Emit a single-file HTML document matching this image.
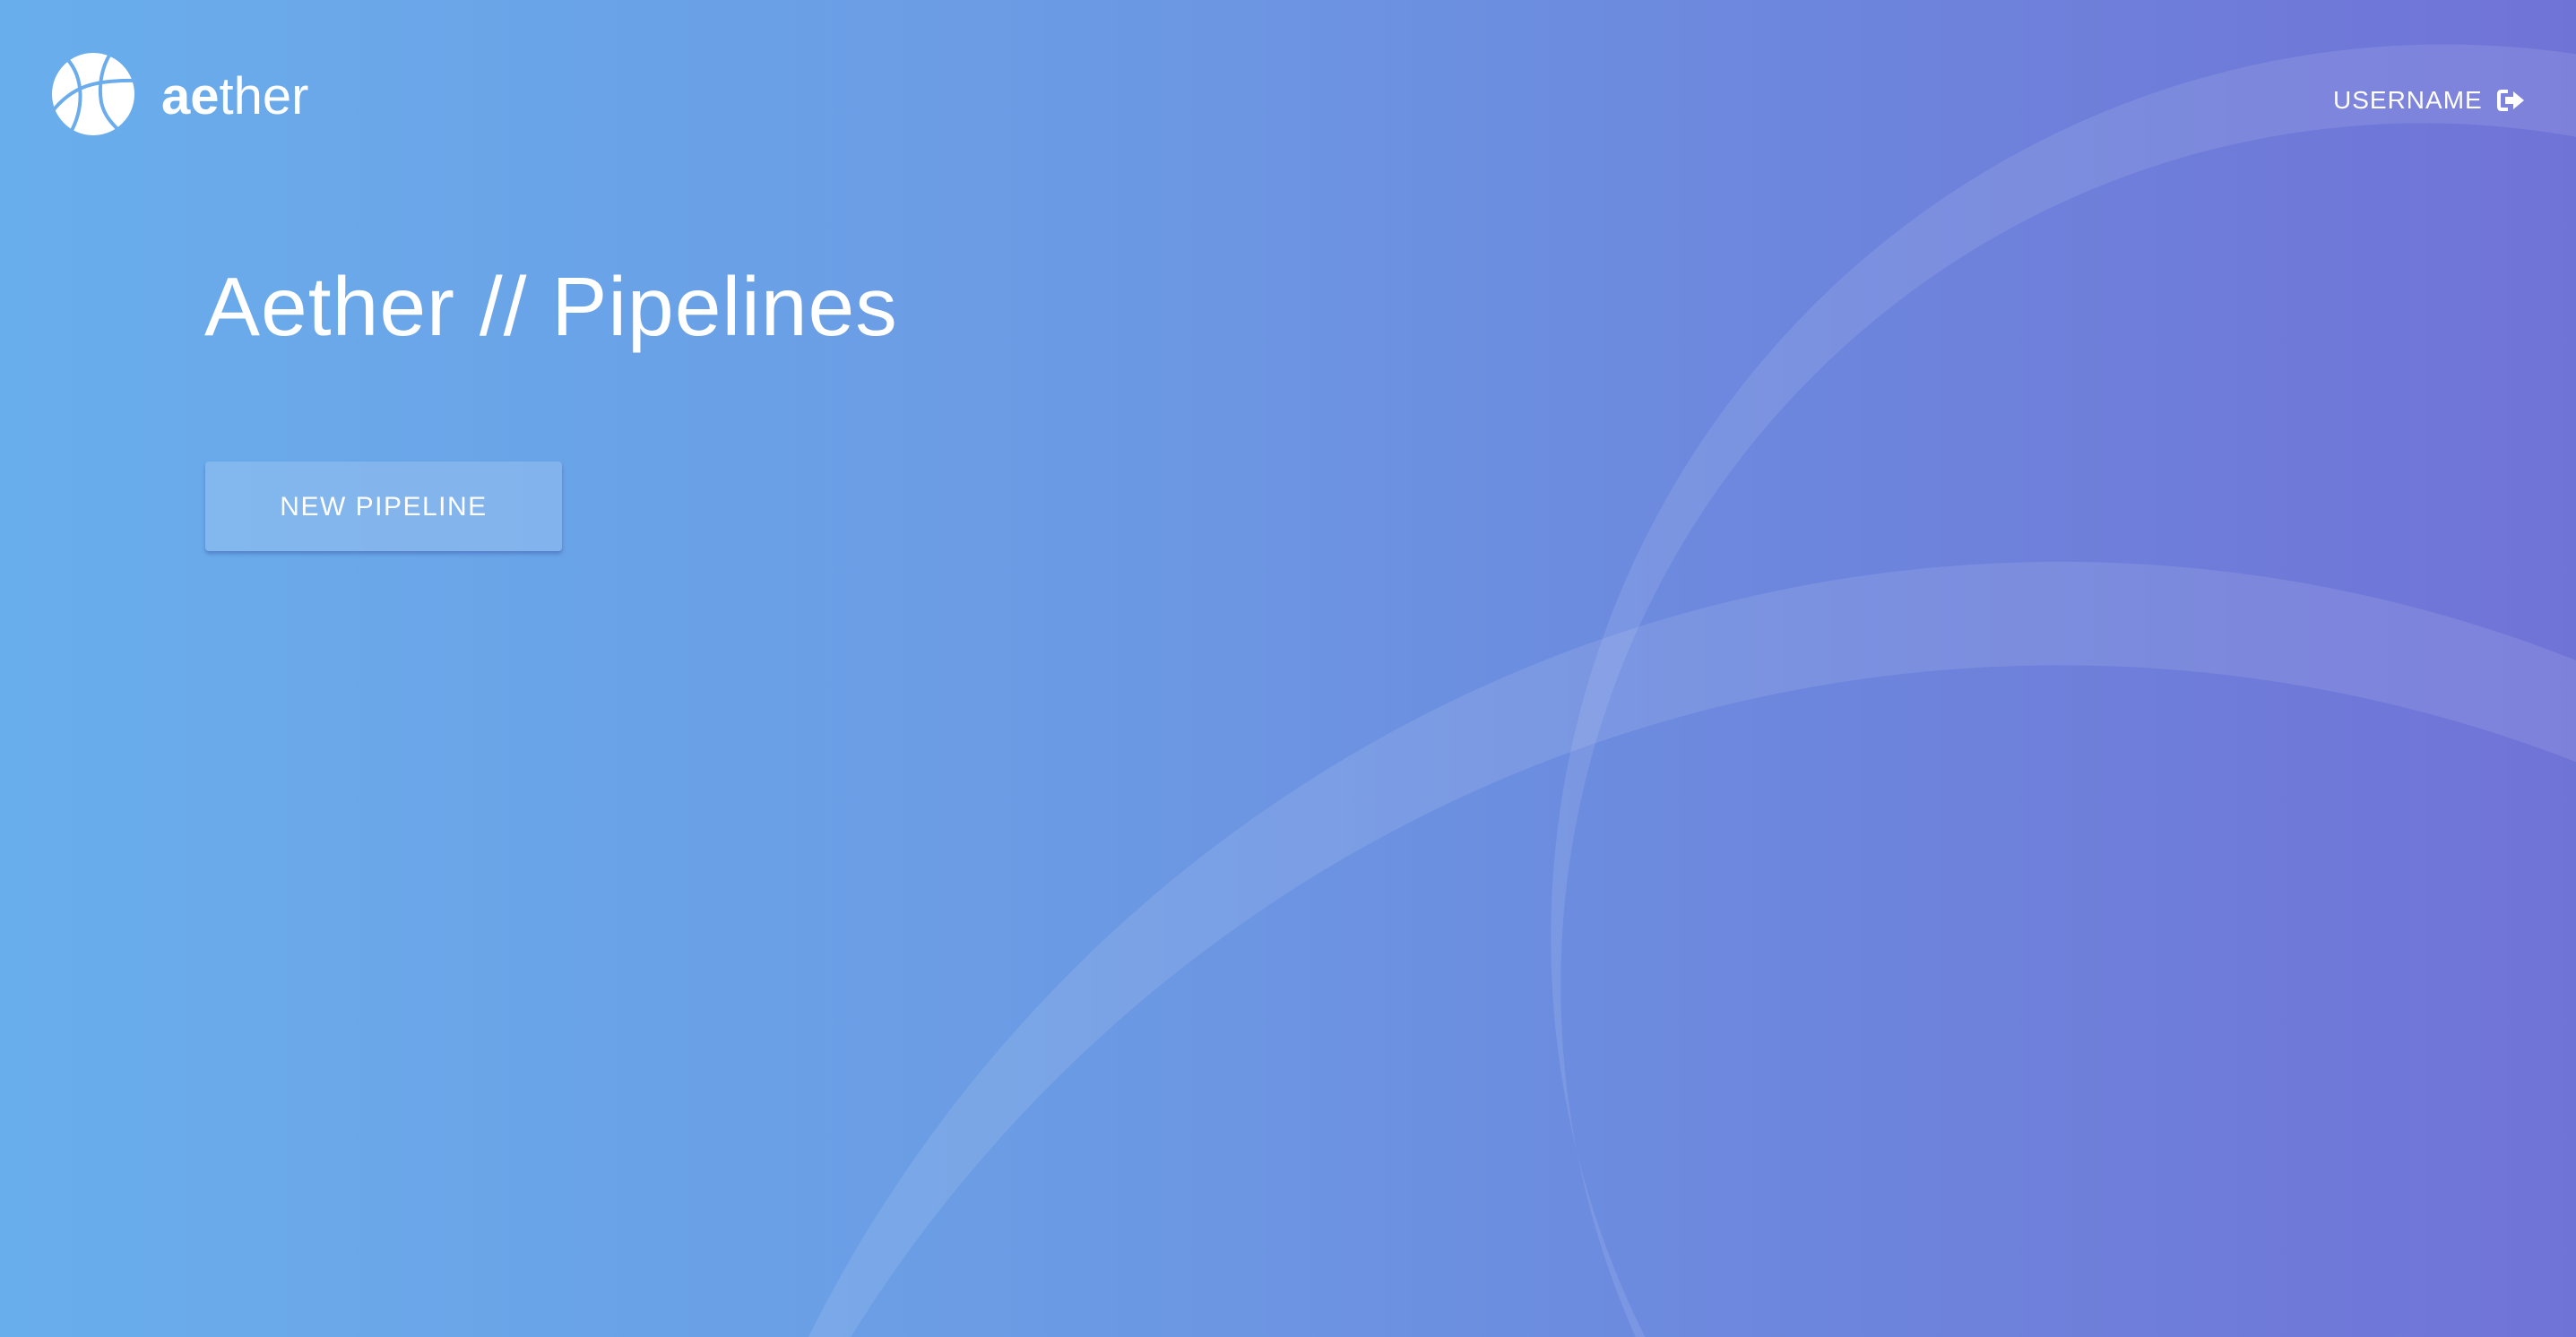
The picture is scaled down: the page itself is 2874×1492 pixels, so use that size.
<!DOCTYPE html>
<html><head><meta charset="utf-8"><style>
html,body{margin:0;padding:0;width:2874px;height:1492px;overflow:hidden}
body{background:linear-gradient(90deg,#69aeec 0%,#6b9be4 40%,#6d86dd 70%,#7073d6 100%);font-family:"Liberation Sans",sans-serif;color:#fff;position:relative}
svg.bg{position:absolute;left:0;top:0}
.brand{position:absolute;left:180px;top:76px;font-size:58px;line-height:64px}
.brand b{font-weight:700}
.brand span{font-weight:300}
h1{position:absolute;left:228px;top:292px;margin:0;font-weight:300;font-size:93px;line-height:100px;letter-spacing:1px;white-space:nowrap}
.btn{position:absolute;left:229px;top:515px;width:398px;height:100px;background:rgba(255,255,255,0.17);border-radius:4px;box-shadow:0 3px 4px rgba(40,60,140,0.35);font-size:30px;letter-spacing:1.5px;text-align:center;line-height:102px}
.user{position:absolute;left:2603px;top:96px;font-size:28px;line-height:32px;letter-spacing:1px}
</style></head><body>
<svg class="bg" width="2874" height="1492" viewBox="0 0 1568 814" preserveAspectRatio="none">
<path fill="#fff" fill-opacity="0.1" fill-rule="evenodd" d="M944,571a544,544 0 1,0 1088,0a544,544 0 1,0 -1088,0Z M950,600a525,525 0 1,0 1050,0a525,525 0 1,0 -1050,0Z"/>
<path fill="#fff" fill-opacity="0.1" fill-rule="evenodd" d="M403,1193a851,851 0 1,0 1702,0a851,851 0 1,0 -1702,0Z M387,1272a867,867 0 1,0 1734,0a867,867 0 1,0 -1734,0Z"/>
</svg>
<svg style="position:absolute;left:55px;top:56px" width="98" height="98" viewBox="0 0 98 98">
<ellipse cx="49" cy="49" rx="46" ry="46" fill="#fff"/>
<g fill="none" stroke="#6aacec" stroke-width="4">
<path d="M20,10 C38,30 40,65 22,95"/>
<path d="M68,4 C58,20 55,40 58,58 C61,72 68,80 80,92"/>
<path d="M2,70 C25,40 50,33 98,34"/>
</g>
</svg>
<div class="brand"><b>ae</b><span>ther</span></div>
<h1>Aether // Pipelines</h1>
<div class="btn">NEW PIPELINE</div>
<div class="user">USERNAME</div>
<svg style="position:absolute;left:2786px;top:100px" width="32" height="24" viewBox="0 0 32 24">
<path d="M12,2 H5 Q2,2 2,5 V19 Q2,22 5,22 H12" fill="none" stroke="#fff" stroke-width="4"/>
<path d="M9,8 H18 V2 L30,12 L18,22 V16 H9 Z" fill="#fff"/>
</svg>
</body></html>
